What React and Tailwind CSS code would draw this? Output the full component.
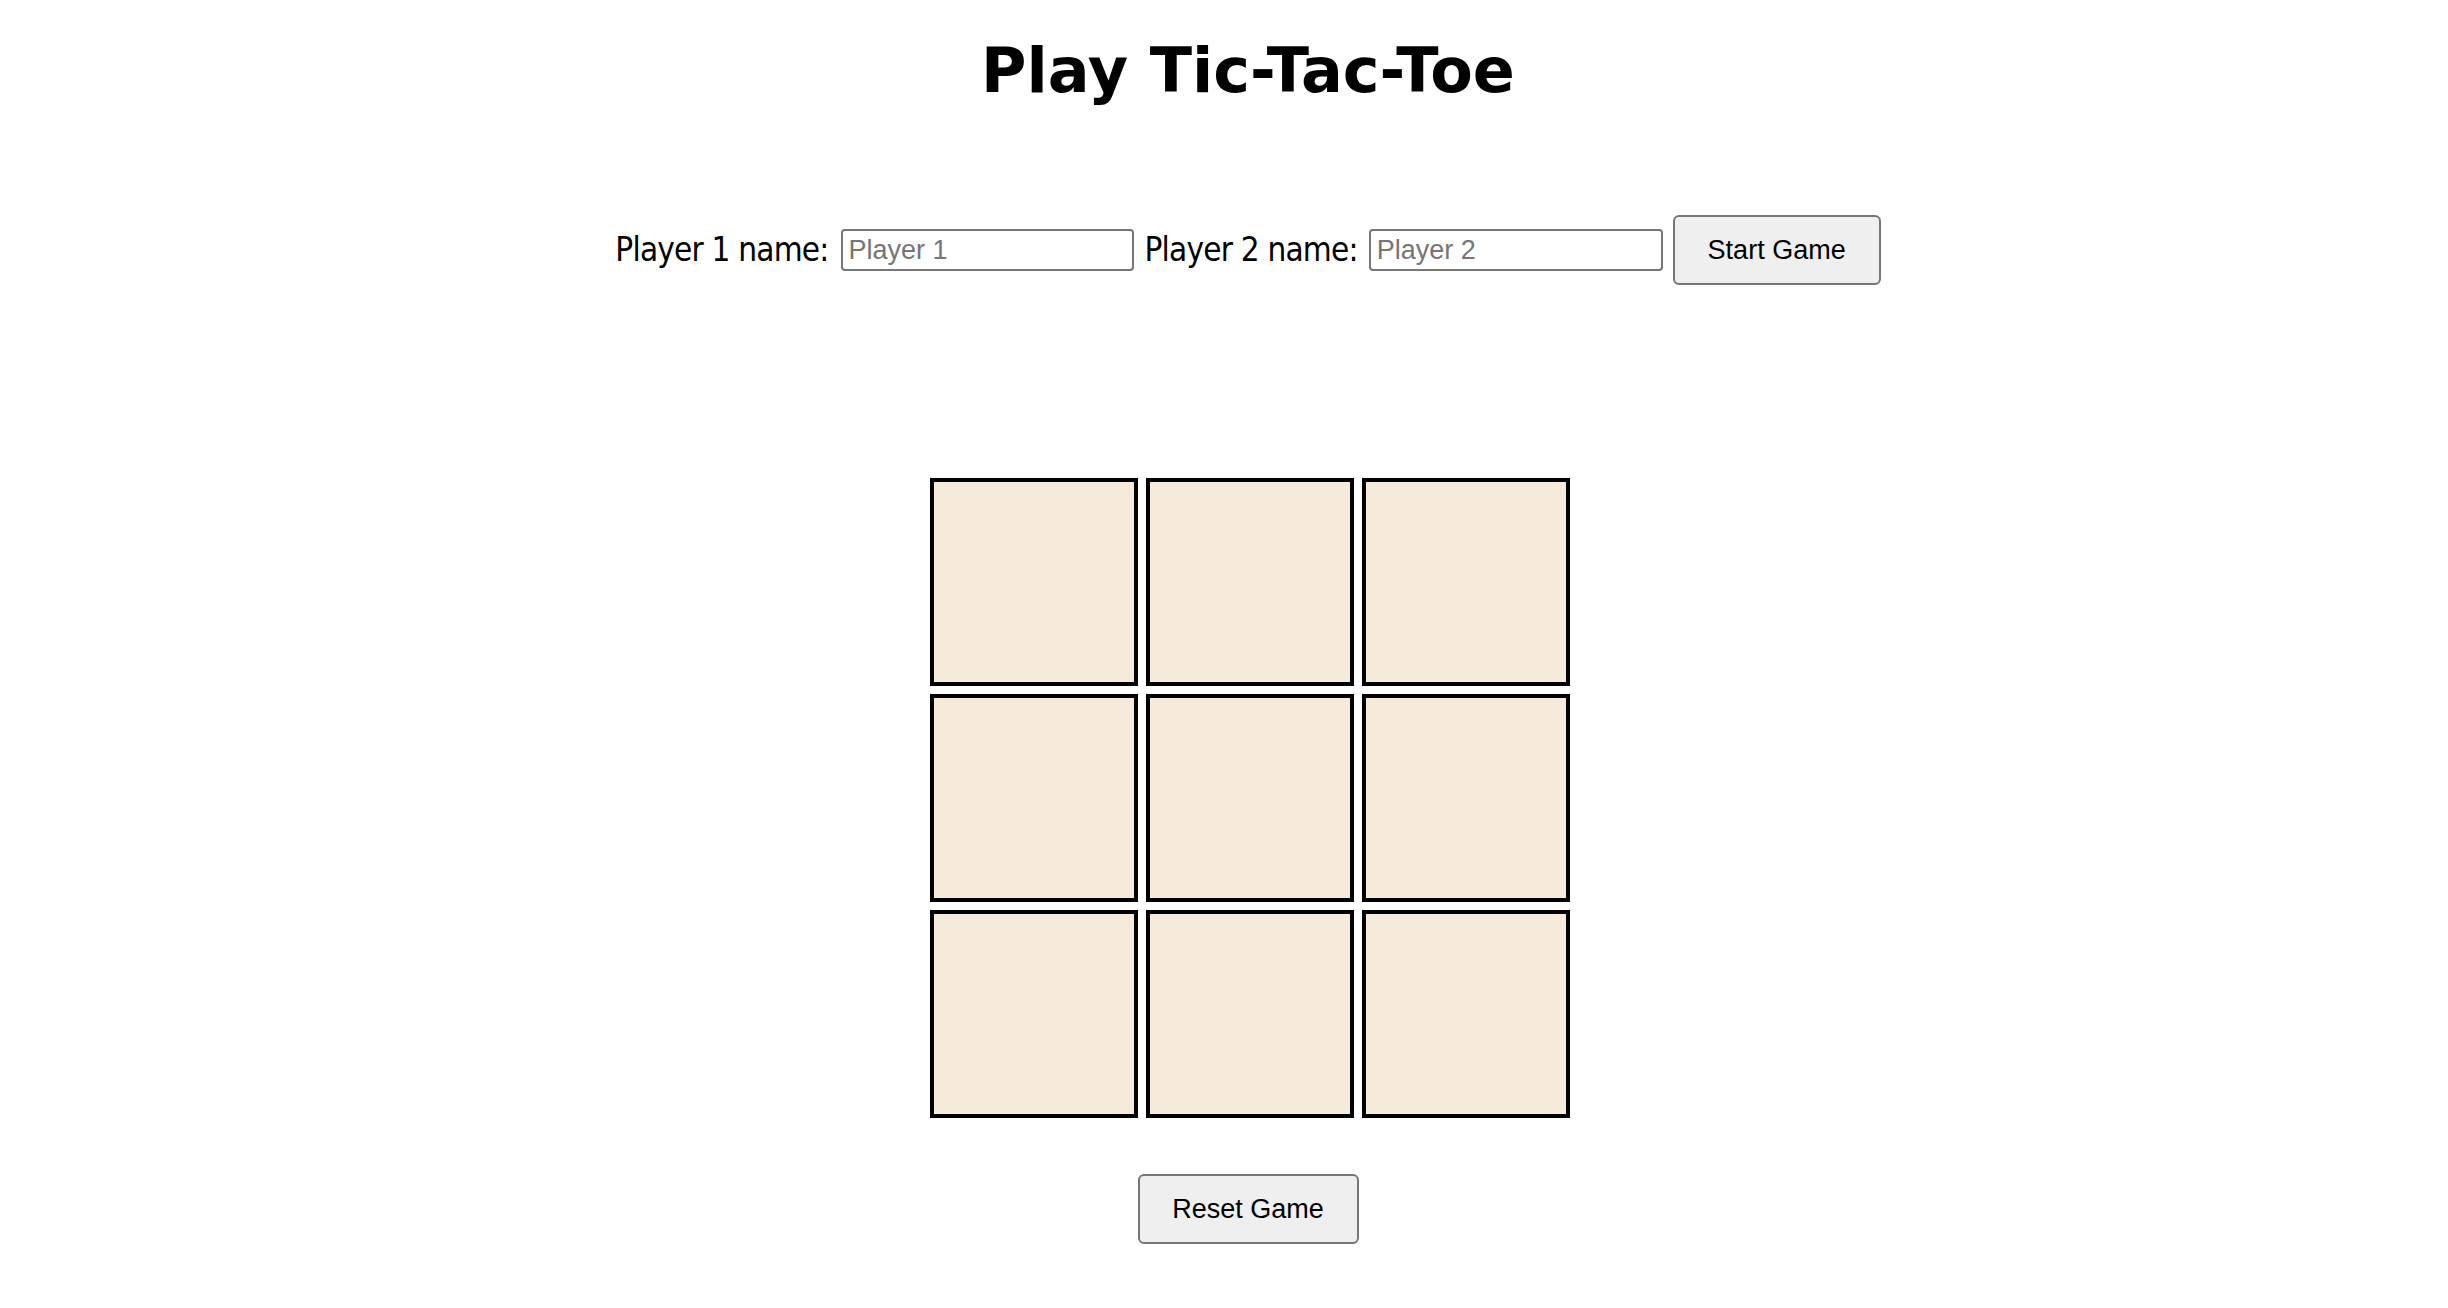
import React, { useState } from "react"

function Cell({ value, onClick }) {
  return (
    <button
      onClick={onClick}
      className="flex h-[208px] w-[208px] items-center justify-center border-4 border-black bg-[#f6ebda] text-[120px] font-bold"
    >
      {value}
    </button>
  )
}

export default function App() {
  const [board, setBoard] = useState(Array(9).fill(""))
  const [p1, setP1] = useState("")
  const [p2, setP2] = useState("")
  const [turn, setTurn] = useState("X")

  const play = (i) => {
    if (board[i]) return
    const next = board.slice()
    next[i] = turn
    setBoard(next)
    setTurn(turn === "X" ? "O" : "X")
  }

  const reset = () => {
    setBoard(Array(9).fill(""))
    setTurn("X")
  }

  return (
    <div className="flex min-h-screen flex-col items-center bg-white pl-[48px] font-['DejaVu_Sans',sans-serif] text-black">
      <h1 className="mt-[33px] text-[62px] font-bold leading-[76px]">Play Tic-Tac-Toe</h1>

      <div className="mt-[106px] flex h-[70px] items-center">
        <label className="font-['DejaVu_Sans_Condensed','DejaVu_Sans',sans-serif] text-[33px] tracking-[-0.8px]">
          Player 1 name:
        </label>
        <input
          value={p1}
          onChange={(e) => setP1(e.target.value)}
          placeholder="Player 1"
          className="ml-[12px] h-[42px] w-[293px] rounded-[4px] border-2 border-[#767676] px-[6px] font-['Liberation_Sans',Arial,sans-serif] text-[27px] outline-none placeholder:text-[#757575]"
        />
        <label className="ml-[11px] font-['DejaVu_Sans_Condensed','DejaVu_Sans',sans-serif] text-[33px] tracking-[-0.8px]">
          Player 2 name:
        </label>
        <input
          value={p2}
          onChange={(e) => setP2(e.target.value)}
          placeholder="Player 2"
          className="ml-[11px] h-[42px] w-[294px] rounded-[4px] border-2 border-[#767676] px-[6px] font-['Liberation_Sans',Arial,sans-serif] text-[27px] outline-none placeholder:text-[#757575]"
        />
        <button className="ml-[10px] h-[70px] w-[208px] rounded-[6px] border-2 border-[#767676] bg-[#efefef] font-['Liberation_Sans',Arial,sans-serif] text-[27px]">
          Start Game
        </button>
      </div>

      <div className="ml-[4px] mt-[193px] grid grid-cols-3 gap-[8px]">
        {board.map((v, i) => (
          <Cell key={i} value={v} onClick={() => play(i)} />
        ))}
      </div>

      <button
        onClick={reset}
        className="mt-[56px] h-[70px] w-[221px] rounded-[6px] border-2 border-[#767676] bg-[#efefef] font-['Liberation_Sans',Arial,sans-serif] text-[27px]"
      >
        Reset Game
      </button>
    </div>
  )
}
